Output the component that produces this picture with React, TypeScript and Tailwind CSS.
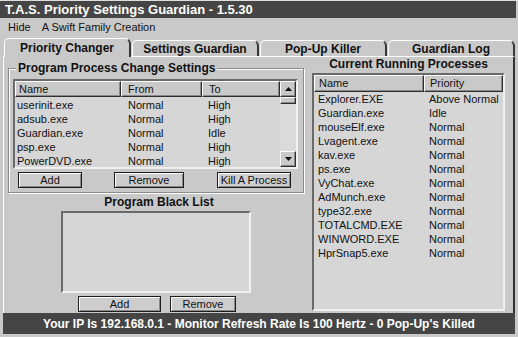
import { useState } from 'react';

const raised =
  'border border-t-white border-l-white border-r-[#2e2e2e] border-b-[#2e2e2e] shadow-[inset_-1px_-1px_0_#8a8a8a]';
const sunken =
  'border-2 border-t-[#6a6a6a] border-l-[#6a6a6a] border-r-[#f0f0f0] border-b-[#f0f0f0] bg-[#d6d6d6]';
const button =
  'h-[16px] border border-[#1c1c1c] bg-[#cdcdcd] shadow-[inset_1px_1px_0_#fff,inset_-1px_-1px_0_#8a8a8a] text-[11px] leading-[14px] text-[#111] flex items-center justify-center';

function Arrow({ up }: { up?: boolean }) {
  return (
    <svg width="7" height="4" viewBox="0 0 7 4">
      <polygon points={up ? '3.5,0 7,4 0,4' : '0,0 7,0 3.5,4'} fill="#111" />
    </svg>
  );
}

function App() {
  const [tab] = useState(0);

  const tabs = ['Priority Changer', 'Settings Guardian', 'Pop-Up Killer', 'Guardian Log'];

  const rules = [
    { name: 'userinit.exe', from: 'Normal', to: 'High' },
    { name: 'adsub.exe', from: 'Normal', to: 'High' },
    { name: 'Guardian.exe', from: 'Normal', to: 'Idle' },
    { name: 'psp.exe', from: 'Normal', to: 'High' },
    { name: 'PowerDVD.exe', from: 'Normal', to: 'High' }
  ];

  const processes = [
    { name: 'Explorer.EXE', priority: 'Above Normal' },
    { name: 'Guardian.exe', priority: 'Idle' },
    { name: 'mouseElf.exe', priority: 'Normal' },
    { name: 'Lvagent.exe', priority: 'Normal' },
    { name: 'kav.exe', priority: 'Normal' },
    { name: 'ps.exe', priority: 'Normal' },
    { name: 'VyChat.exe', priority: 'Normal' },
    { name: 'AdMunch.exe', priority: 'Normal' },
    { name: 'type32.exe', priority: 'Normal' },
    { name: 'TOTALCMD.EXE', priority: 'Normal' },
    { name: 'WINWORD.EXE', priority: 'Normal' },
    { name: 'HprSnap5.exe', priority: 'Normal' }
  ];

  return (
    <div className="w-[518px] h-[337px] flex flex-col bg-[#c9c9c9] border-t border-[#dedede] font-['Liberation_Sans',Arial,sans-serif] text-[#111] overflow-hidden select-none">
      {/* title bar */}
      <div className="h-[17px] bg-[#454545] text-white font-bold text-[13px] leading-[17px] pl-[5px] mr-[2px]">
        T.A.S. Priority Settings Guardian - 1.5.30
      </div>

      {/* menu */}
      <div className="h-[19px] flex items-center text-[11px] pl-[8px] gap-[11px]">
        <span>Hide</span>
        <span>A Swift Family Creation</span>
      </div>

      {/* tabs */}
      <div className="h-[19px] flex items-end pl-[4px]">
        {tabs.map((t, i) => (
          <div
            key={t}
            className={
              i === tab
                ? 'relative z-10 -mb-[1px] h-[19px] w-[127px] bg-[#c9c9c9] border-t border-l border-r-2 border-t-white border-l-white border-r-[#3a3a3a] rounded-tl-[5px] rounded-tr-[6px] flex items-center justify-center font-bold text-[12px]'
                : 'h-[16px] w-[127px] ml-[1px] border-t border-l border-r-2 border-t-white border-l-white border-r-[#3a3a3a] rounded-tl-[5px] rounded-tr-[6px] flex items-center justify-center font-bold text-[12px]'
            }
          >
            {t}
          </div>
        ))}
      </div>

      {/* content */}
      <div className="h-[257px] mx-[3px] flex border-t border-l border-r-2 border-t-white border-l-white border-r-[#333]">
        {/* left column */}
        <div className="w-[302px] pl-[4px] flex flex-col">
          <fieldset className="mt-[4px] w-[296px] border border-[#8a8a8a] shadow-[inset_1px_1px_0_#fff,1px_1px_0_#fff] px-[4px] pb-[4px]">
            <legend className="ml-[3px] px-[2px] bg-[#c9c9c9] font-bold text-[12px] leading-[14px]">
              Program Process Change Settings
            </legend>
            <div className={`mt-[4px] w-[285px] h-[90px] flex overflow-hidden ${sunken}`}>
              <div className="flex-1 flex flex-col overflow-hidden">
                <div className="h-[16px] flex text-[11px] leading-[14px]">
                  <div className={`w-[106px] pl-[3px] bg-[#c9c9c9] ${raised}`}>Name</div>
                  <div className={`w-[81px] pl-[6px] bg-[#c9c9c9] ${raised}`}>From</div>
                  <div className={`flex-1 pl-[6px] bg-[#c9c9c9] ${raised}`}>To</div>
                </div>
                <div className="pt-[1px] pl-[2px] text-[11px]">
                  {rules.map(r => (
                    <div key={r.name} className="h-[14px] leading-[14px] flex">
                      <span className="w-[111px]">{r.name}</span>
                      <span className="w-[80px]">{r.from}</span>
                      <span>{r.to}</span>
                    </div>
                  ))}
                </div>
              </div>
              <div className="w-[16px] flex flex-col bg-[#dadada]">
                <div className={`h-[16px] bg-[#c9c9c9] flex items-center justify-center ${raised}`}>
                  <Arrow up />
                </div>
                <div className={`h-[7px] bg-[#c9c9c9] ${raised}`} />
                <div className="flex-1" />
                <div className={`h-[16px] bg-[#c9c9c9] flex items-center justify-center ${raised}`}>
                  <Arrow />
                </div>
              </div>
            </div>
            <div className="mt-[3px] flex pl-[5px]">
              <div className={`w-[64px] ${button}`}>Add</div>
              <div className={`ml-[32px] w-[70px] ${button}`}>Remove</div>
              <div className={`ml-[33px] w-[74px] ${button}`}>Kill A Process</div>
            </div>
          </fieldset>

          <div className="mt-[2px] h-[14px] leading-[14px] text-center font-bold text-[12px] pl-[4px]">
            Program Black List
          </div>
          <div className={`mt-[2px] ml-[53px] w-[190px] h-[82px] ${sunken}`} />
          <div className="mt-[3px] ml-[70px] flex gap-[9px]">
            <div className={`w-[83px] ${button}`}>Add</div>
            <div className={`w-[66px] ${button}`}>Remove</div>
          </div>
        </div>

        {/* right column */}
        <div className="w-[207px] pl-[6px] pr-[8px] flex flex-col">
          <div className="h-[14px] leading-[14px] text-center font-bold text-[12px]">
            Current Running Processes
          </div>
          <div className={`mt-[2px] w-[193px] h-[238px] flex flex-col overflow-hidden ${sunken}`}>
            <div className="h-[17px] flex text-[11px] leading-[15px]">
              <div className={`w-[110px] pl-[4px] bg-[#c9c9c9] ${raised}`}>Name</div>
              <div className={`flex-1 pl-[5px] bg-[#c9c9c9] ${raised}`}>Priority</div>
            </div>
            <div className="pl-[4px] text-[11px]">
              {processes.map(p => (
                <div key={p.name} className="h-[14px] leading-[14px] flex">
                  <span className="w-[111px]">{p.name}</span>
                  <span>{p.priority}</span>
                </div>
              ))}
            </div>
          </div>
        </div>
      </div>

      {/* status bar */}
      <div className="h-[21px] mx-[3px] bg-[#454545] text-white font-bold text-[12px] flex items-center justify-center">
        Your IP Is 192.168.0.1 - Monitor Refresh Rate Is 100 Hertz - 0 Pop-Up's Killed
      </div>
    </div>
  );
}

export default App;
